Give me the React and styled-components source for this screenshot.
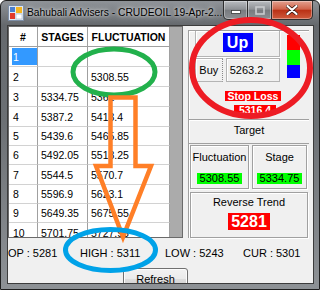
import React from "react";
import styled, { createGlobalStyle } from "styled-components";

const GlobalStyle = createGlobalStyle`
  html, body { margin: 0; padding: 0; background: #ffffff; }
  body { font-family: "Liberation Sans", Arial, sans-serif; }
`;

const Window = styled.div`
  position: relative;
  width: 320px;
  height: 290px;
  box-sizing: border-box;
  border: 1px solid #1f1f1f;
  border-radius: 6px 6px 0 0;
  background: linear-gradient(180deg, #8f9398 0px, #65696d 24px, #6c7074 120px, #8e9296 290px);
  display: flex;
  flex-direction: column;
  overflow: hidden;
`;

const TitleBar = styled.div`
  height: 25px;
  display: flex;
  align-items: flex-start;
  padding-left: 7px;
  flex-shrink: 0;
`;

const AppIcon = styled.svg`
  margin-top: 4px;
  flex-shrink: 0;
`;

const TitleText = styled.div`
  margin: 5px 0 0 3px;
  font-size: 10.3px;
  line-height: 14px;
  color: #000;
  white-space: nowrap;
  text-shadow: 0 0 6px rgba(255, 255, 255, 0.85), 0 0 3px rgba(255, 255, 255, 0.7);
`;

const Captions = styled.div`
  margin-left: auto;
  margin-right: 6px;
  display: flex;
`;

const CapButton = styled.div`
  width: ${p => p.$w}px;
  height: 19px;
  box-sizing: border-box;
  border: 1px solid #2e2e2e;
  border-top: none;
  border-left: ${p => (p.$first ? "1px solid #2e2e2e" : "none")};
  border-radius: ${p => p.$radius};
  display: flex;
  align-items: center;
  justify-content: center;
  box-shadow: inset 0 0 0 1px rgba(255, 255, 255, 0.35);
  background: ${p =>
    p.$close
      ? "linear-gradient(180deg, #e3a08f 0%, #d0644b 45%, #bb3216 52%, #cf5a3c 100%)"
      : "linear-gradient(180deg, #b9bcc0 0%, #8f9296 45%, #787b7f 52%, #8d9094 100%)"};
`;

const Client = styled.div`
  flex: 1;
  margin: 0 6px 6px 7px;
  background: #f0f0f0;
  box-shadow: 0 0 0 1px #3c3c3c;
  display: flex;
  flex-direction: column;
  overflow: hidden;
  font-size: 11px;
  color: #000;
`;

const TopArea = styled.div`
  display: flex;
  height: 212px;
  flex-shrink: 0;
`;

const Grid = styled.div`
  width: 183px;
  height: 212px;
  box-sizing: border-box;
  border: 1px solid #6a6a6a;
  background: #ababab;
  overflow: hidden;
`;

const GridRow = styled.div`
  display: grid;
  grid-template-columns: 29px 50px 82px;
  width: 161px;
  height: ${p => p.$h}px;
`;

const Cell = styled.div`
  background: #ffffff;
  box-sizing: border-box;
  border-right: 1px solid #a0a0a0;
  border-bottom: 1px solid ${p => (p.$head ? "#a0a0a0" : "#d2d2d2")};
  display: flex;
  align-items: center;
  justify-content: ${p => (p.$head ? "center" : "flex-start")};
  padding: ${p => (p.$sel ? "1px 0 1px 3px" : p.$head ? "0" : "0 0 0 3px")};
  font-size: 10.5px;
  font-weight: ${p => (p.$head ? 700 : 400)};
  white-space: nowrap;
  overflow: hidden;
`;

const NumCell = styled(Cell)`
  padding-left: ${p => (p.$sel ? "3px" : "4px")};
`;

const SelMark = styled.span`
  display: flex;
  align-items: center;
  width: 100%;
  height: 100%;
  background: #3399ff;
  color: #ffffff;
  padding-left: 1px;
`;

const RightPanel = styled.div`
  width: 130px;
  flex-shrink: 0;
  padding: 4px 0 0 5px;
  box-sizing: border-box;
`;

const Section = styled.div`
  width: 121px;
  height: 208px;
  box-sizing: border-box;
  border-left: 1px solid #a0a0a0;
  border-top: 1px solid #a0a0a0;
  box-shadow: inset 1px 1px 0 #ffffff;
  display: flex;
  flex-direction: column;
`;

const TopBlock = styled.div`
  height: 89px;
  box-sizing: border-box;
  padding-left: 6px;
  border-bottom: 1px solid #a0a0a0;
  display: flex;
  flex-direction: column;
  align-items: flex-start;
`;

const SignalRow = styled.div`
  display: flex;
  align-items: flex-start;
`;

const SignalCol = styled.div`
  width: 85px;
  display: flex;
  flex-direction: column;
  gap: 1px;
`;

const UpFrame = styled.div`
  height: 26px;
  box-sizing: border-box;
  border: 1px solid #b4b4b4;
  border-top: none;
  box-shadow: inset 1px 1px 0 #ffffff, 1px 1px 0 #ffffff;
  display: flex;
  align-items: flex-start;
  justify-content: center;
  padding-top: 2px;
`;

const UpLabel = styled.div`
  width: 30px;
  height: 19px;
  background: #0000ff;
  color: #ffffff;
  font-weight: 700;
  font-size: 16px;
  line-height: 19px;
  text-align: center;
`;

const BuyRow = styled.div`
  display: flex;
  height: 24px;
  gap: 3px;
`;

const BuyBox = styled.div`
  width: ${p => p.$w}px;
  box-sizing: border-box;
  border: 1px solid #b4b4b4;
  box-shadow: inset 1px 1px 0 #ffffff;
  background: #f0f0f0;
  display: flex;
  align-items: center;
  justify-content: ${p => (p.$center ? "center" : "flex-start")};
  padding-left: ${p => (p.$center ? 0 : 3)}px;
  font-size: 11px;
  border-right-style: ${p => (p.$dotted ? "dotted" : "solid")};
  border-right-color: ${p => (p.$dotted ? "#888" : "#b4b4b4")};
`;

const ColourStack = styled.div`
  margin: 4px 0 0 7px;
  width: 13px;
  display: flex;
  flex-direction: column;
`;

const Swatch = styled.div`
  height: ${p => p.$h}px;
  background: ${p => p.$c};
`;

const RedTag = styled.div`
  align-self: center;
  margin: ${p => p.$m};
  background: #ff0000;
  color: #ffffff;
  font-weight: 700;
  font-size: 10.5px;
  line-height: 10px;
  height: 10px;
  padding: 0 ${p => p.$px}px;
  white-space: nowrap;
`;

const TargetRow = styled.div`
  height: 24px;
  box-sizing: border-box;
  border-bottom: 1px solid #a0a0a0;
  box-shadow: inset 0 1px 0 #ffffff;
  display: flex;
  align-items: center;
  justify-content: center;
  padding-bottom: 3px;
  font-size: 11px;
`;

const GroupRow = styled.div`
  display: flex;
  gap: 3px;
  padding: 1px 0 0 1px;
`;

const GroupBox = styled.div`
  width: ${p => p.$w}px;
  height: ${p => p.$h}px;
  box-sizing: border-box;
  border: 1px solid #a0a0a0;
  box-shadow: inset 1px 1px 0 #ffffff, 1px 1px 0 #ffffff;
  display: flex;
  flex-direction: column;
  align-items: center;
  flex-shrink: 0;
`;

const GroupTitle = styled.div`
  margin-top: ${p => p.$mt}px;
  font-size: 11px;
  line-height: 13px;
  white-space: nowrap;
`;

const GreenTag = styled.div`
  margin-top: 9px;
  background: #00ff00;
  font-size: 11px;
  line-height: 11px;
  height: 11px;
  padding: 0 3px;
  white-space: nowrap;
`;

const TrendTag = styled.div`
  margin-top: 4px;
  width: 42px;
  height: 17px;
  background: #ff0000;
  color: #ffffff;
  font-weight: 700;
  font-size: 16px;
  line-height: 17px;
  text-align: center;
`;

const ReverseWrap = styled.div`
  padding: 3px 0 0 1px;
`;

const StatusRow = styled.div`
  display: grid;
  grid-template-columns: 72px 85px 78px auto;
  margin-top: 8px;
  height: 14px;
  line-height: 14px;
  font-size: 11px;
  white-space: nowrap;
  flex-shrink: 0;
`;

const RefreshButton = styled.div`
  margin: 8px 0 0 115px;
  width: 65px;
  height: 21px;
  flex-shrink: 0;
  box-sizing: border-box;
  border: 1px solid #707070;
  border-radius: 3px;
  box-shadow: inset 0 0 0 1px #fcfcfc;
  background: linear-gradient(180deg, #f2f2f2 0%, #ebebeb 50%, #dddddd 51%, #cfcfcf 100%);
  display: flex;
  align-items: center;
  justify-content: center;
  font-size: 11px;
`;

const Overlay = styled.svg`
  position: absolute;
  top: -1px;
  left: -1px;
  pointer-events: none;
`;

const rows = [
  { n: "1", stage: "", fluct: "", h: 20, sel: true },
  { n: "2", stage: "", fluct: "5308.55", h: 20 },
  { n: "3", stage: "5334.75", fluct: "5361", h: 20 },
  { n: "4", stage: "5387.2", fluct: "5413.4", h: 20 },
  { n: "5", stage: "5439.6", fluct: "5465.85", h: 19 },
  { n: "6", stage: "5492.05", fluct: "5518.25", h: 19 },
  { n: "7", stage: "5544.5", fluct: "5570.7", h: 20 },
  { n: "8", stage: "5596.9", fluct: "5623.1", h: 19 },
  { n: "9", stage: "5649.35", fluct: "5675.55", h: 19 },
  { n: "10", stage: "5701.75", fluct: "5727.95", h: 20 },
];

export default function App() {
  return (
    <>
      <GlobalStyle />
      <Window>
        <TitleBar>
          <AppIcon width="16" height="16" viewBox="0 0 16 16">
            <rect x="0.5" y="0.5" width="15" height="15" fill="#dfe8f3" stroke="#7d8ea6" />
            <rect x="2" y="2" width="5" height="5" fill="#4a7fd0" />
            <rect x="2" y="8" width="5" height="6" fill="#e23a2a" />
            <rect x="8" y="2" width="6" height="6" fill="#f4b521" />
            <rect x="8" y="9" width="6" height="5" fill="#ffffff" stroke="#9fb0c6" strokeWidth="0.6" />
          </AppIcon>
          <TitleText>Bahubali Advisers - CRUDEOIL 19-Apr-2...</TitleText>
          <Captions>
            <CapButton $w={25} $first $radius="0 0 0 5px">
              <svg width="10" height="10" viewBox="0 0 10 10">
                <rect x="0.5" y="5.5" width="9" height="3" fill="#ffffff" stroke="#3a3a3a" strokeWidth="0.8" />
              </svg>
            </CapButton>
            <CapButton $w={24} $radius="0">
              <svg width="10" height="9" viewBox="0 0 10 9">
                <rect x="1" y="1" width="8" height="7" fill="none" stroke="#c9cbce" strokeWidth="1.6" />
              </svg>
            </CapButton>
            <CapButton $w={41} $close $radius="0 0 5px 0">
              <svg width="12" height="10" viewBox="0 0 12 10">
                <path d="M1.5 1 L10.5 9 M10.5 1 L1.5 9" stroke="#3a1a12" strokeWidth="3.6" strokeLinecap="round" />
                <path d="M1.5 1 L10.5 9 M10.5 1 L1.5 9" stroke="#ffffff" strokeWidth="2.2" strokeLinecap="round" />
              </svg>
            </CapButton>
          </Captions>
        </TitleBar>

        <Client>
          <TopArea>
            <Grid>
              <GridRow $h={20}>
                <Cell $head>#</Cell>
                <Cell $head>STAGES</Cell>
                <Cell $head>FLUCTUATION</Cell>
              </GridRow>
              {rows.map(r => (
                <GridRow key={r.n} $h={r.h}>
                  <NumCell $sel={r.sel}>{r.sel ? <SelMark>{r.n}</SelMark> : r.n}</NumCell>
                  <Cell>{r.stage}</Cell>
                  <Cell>{r.fluct}</Cell>
                </GridRow>
              ))}
            </Grid>

            <RightPanel>
              <Section>
                <TopBlock>
                  <SignalRow>
                    <SignalCol>
                      <UpFrame>
                        <UpLabel>Up</UpLabel>
                      </UpFrame>
                      <BuyRow>
                        <BuyBox $w={28} $center $dotted>Buy</BuyBox>
                        <BuyBox $w={55}>5263.2</BuyBox>
                      </BuyRow>
                    </SignalCol>
                    <ColourStack>
                      <Swatch $h={15} $c="#ff0000" />
                      <Swatch $h={15} $c="#00ff00" />
                      <Swatch $h={13} $c="#0000ff" />
                    </ColourStack>
                  </SignalRow>
                  <RedTag $m="9px 0 0 2px" $px={3}>Stop Loss</RedTag>
                  <RedTag $m="4px 0 0 6px" $px={5}>5316.4</RedTag>
                </TopBlock>
                <TargetRow>Target</TargetRow>
                <GroupRow>
                  <GroupBox $w={59} $h={44}>
                    <GroupTitle $mt={5}>Fluctuation</GroupTitle>
                    <GreenTag>5308.55</GreenTag>
                  </GroupBox>
                  <GroupBox $w={55} $h={44}>
                    <GroupTitle $mt={5}>Stage</GroupTitle>
                    <GreenTag>5334.75</GreenTag>
                  </GroupBox>
                </GroupRow>
                <ReverseWrap>
                  <GroupBox $w={118} $h={46}>
                    <GroupTitle $mt={3}>Reverse Trend</GroupTitle>
                    <TrendTag>5281</TrendTag>
                  </GroupBox>
                </ReverseWrap>
              </Section>
            </RightPanel>
          </TopArea>

          <StatusRow>
            <span>OP : 5281</span>
            <span>HIGH : 5311</span>
            <span>LOW : 5243</span>
            <span>CUR : 5301</span>
          </StatusRow>
          <RefreshButton>Refresh</RefreshButton>
        </Client>

        <Overlay width="320" height="290" viewBox="0 0 320 290">
          <ellipse cx="114" cy="72" rx="41" ry="23" fill="none" stroke="#22b14c" strokeWidth="5" />
          <polygon
            points="110.5,97.5 135.5,97.5 135.5,166 151,166 123,237 96,166 110.5,166"
            fill="none"
            stroke="#ff7f27"
            strokeWidth="4.5"
            strokeLinejoin="miter"
          />
          <ellipse cx="251" cy="68" rx="59" ry="48" fill="none" stroke="#ed1c24" strokeWidth="6" />
          <ellipse cx="110.5" cy="250" rx="45" ry="20.5" fill="none" stroke="#00a2e8" strokeWidth="5" />
        </Overlay>
      </Window>
    </>
  );
}
